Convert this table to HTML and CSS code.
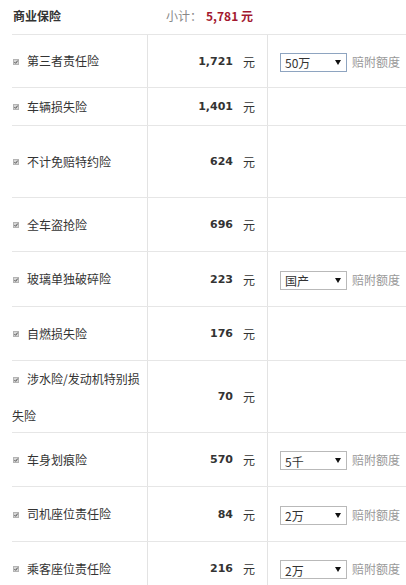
FILE: index.html
```html
<!DOCTYPE html>
<html lang="zh-CN">
<head>
<meta charset="utf-8">
<title>商业保险</title>
<link rel="stylesheet" href="styles.css">
</head>
<body>
<div class="page">
  <div class="head">
    <span class="title">商业保险</span>
    <span class="sub">小计：</span>
    <span class="total">5,781 元</span>
  </div>

  <div class="row h52">
    <div class="name"><span class="label"><svg class="cb" viewBox="0 0 6 6" width="6" height="6"><rect x="0.5" y="0.5" width="5" height="5" fill="#d6d6d6" stroke="#b4b4b4"/><path d="M1.4 3.1 L2.6 4.3 L4.7 1.6" fill="none" stroke="#444" stroke-width="0.9"/></svg>第三者责任险</span></div>
    <div class="price"><span class="num">1,721</span><span class="unit">元</span></div>
    <div class="opt"><div class="sel focus"><span>50万</span><i class="arrow"></i></div><span class="hint">赔附额度</span></div>
  </div>

  <div class="row h37">
    <div class="name"><span class="label"><svg class="cb" viewBox="0 0 6 6" width="6" height="6"><rect x="0.5" y="0.5" width="5" height="5" fill="#d6d6d6" stroke="#b4b4b4"/><path d="M1.4 3.1 L2.6 4.3 L4.7 1.6" fill="none" stroke="#444" stroke-width="0.9"/></svg>车辆损失险</span></div>
    <div class="price"><span class="num">1,401</span><span class="unit">元</span></div>
    <div class="opt"></div>
  </div>

  <div class="row h71">
    <div class="name"><span class="label"><svg class="cb" viewBox="0 0 6 6" width="6" height="6"><rect x="0.5" y="0.5" width="5" height="5" fill="#d6d6d6" stroke="#b4b4b4"/><path d="M1.4 3.1 L2.6 4.3 L4.7 1.6" fill="none" stroke="#444" stroke-width="0.9"/></svg>不计免赔特约险</span></div>
    <div class="price"><span class="num">624</span><span class="unit">元</span></div>
    <div class="opt"></div>
  </div>

  <div class="row h53">
    <div class="name"><span class="label"><svg class="cb" viewBox="0 0 6 6" width="6" height="6"><rect x="0.5" y="0.5" width="5" height="5" fill="#d6d6d6" stroke="#b4b4b4"/><path d="M1.4 3.1 L2.6 4.3 L4.7 1.6" fill="none" stroke="#444" stroke-width="0.9"/></svg>全车盗抢险</span></div>
    <div class="price"><span class="num">696</span><span class="unit">元</span></div>
    <div class="opt"></div>
  </div>

  <div class="row h54">
    <div class="name"><span class="label"><svg class="cb" viewBox="0 0 6 6" width="6" height="6"><rect x="0.5" y="0.5" width="5" height="5" fill="#d6d6d6" stroke="#b4b4b4"/><path d="M1.4 3.1 L2.6 4.3 L4.7 1.6" fill="none" stroke="#444" stroke-width="0.9"/></svg>玻璃单独破碎险</span></div>
    <div class="price"><span class="num">223</span><span class="unit">元</span></div>
    <div class="opt"><div class="sel"><span>国产</span><i class="arrow"></i></div><span class="hint">赔附额度</span></div>
  </div>

  <div class="row h53">
    <div class="name"><span class="label"><svg class="cb" viewBox="0 0 6 6" width="6" height="6"><rect x="0.5" y="0.5" width="5" height="5" fill="#d6d6d6" stroke="#b4b4b4"/><path d="M1.4 3.1 L2.6 4.3 L4.7 1.6" fill="none" stroke="#444" stroke-width="0.9"/></svg>自燃损失险</span></div>
    <div class="price"><span class="num">176</span><span class="unit">元</span></div>
    <div class="opt"></div>
  </div>

  <div class="row h71">
    <div class="name"><span class="label wrap"><svg class="cb" viewBox="0 0 6 6" width="6" height="6"><rect x="0.5" y="0.5" width="5" height="5" fill="#d6d6d6" stroke="#b4b4b4"/><path d="M1.4 3.1 L2.6 4.3 L4.7 1.6" fill="none" stroke="#444" stroke-width="0.9"/></svg>涉水险/发动机特别损失险</span></div>
    <div class="price"><span class="num">70</span><span class="unit">元</span></div>
    <div class="opt"></div>
  </div>

  <div class="row h53">
    <div class="name"><span class="label"><svg class="cb" viewBox="0 0 6 6" width="6" height="6"><rect x="0.5" y="0.5" width="5" height="5" fill="#d6d6d6" stroke="#b4b4b4"/><path d="M1.4 3.1 L2.6 4.3 L4.7 1.6" fill="none" stroke="#444" stroke-width="0.9"/></svg>车身划痕险</span></div>
    <div class="price"><span class="num">570</span><span class="unit">元</span></div>
    <div class="opt"><div class="sel"><span>5千</span><i class="arrow"></i></div><span class="hint">赔附额度</span></div>
  </div>

  <div class="row h54">
    <div class="name"><span class="label"><svg class="cb" viewBox="0 0 6 6" width="6" height="6"><rect x="0.5" y="0.5" width="5" height="5" fill="#d6d6d6" stroke="#b4b4b4"/><path d="M1.4 3.1 L2.6 4.3 L4.7 1.6" fill="none" stroke="#444" stroke-width="0.9"/></svg>司机座位责任险</span></div>
    <div class="price"><span class="num">84</span><span class="unit">元</span></div>
    <div class="opt"><div class="sel"><span>2万</span><i class="arrow"></i></div><span class="hint">赔附额度</span></div>
  </div>

  <div class="row h53">
    <div class="name"><span class="label"><svg class="cb" viewBox="0 0 6 6" width="6" height="6"><rect x="0.5" y="0.5" width="5" height="5" fill="#d6d6d6" stroke="#b4b4b4"/><path d="M1.4 3.1 L2.6 4.3 L4.7 1.6" fill="none" stroke="#444" stroke-width="0.9"/></svg>乘客座位责任险</span></div>
    <div class="price"><span class="num">216</span><span class="unit">元</span></div>
    <div class="opt"><div class="sel"><span>2万</span><i class="arrow"></i></div><span class="hint">赔附额度</span></div>
  </div>
</div>
</body>
</html>
```

FILE: styles.css
```css
* { box-sizing: border-box; }

html, body {
  margin: 0;
  padding: 0;
  background: #fff;
}

body {
  font-family: "Noto Sans CJK SC", "Noto Sans", sans-serif;
  font-size: 12px;
  color: #333;
  overflow: hidden;
}

.page {
  margin-left: 12px;
  width: 394px;
}

.head {
  height: 35px;
  border-bottom: 1px solid #e6e6e6;
  display: flex;
  align-items: center;
  padding-left: 1px;
  padding-bottom: 4px;
}

.title {
  width: 153px;
  font-weight: bold;
  font-size: 12px;
  color: #333;
}

.sub {
  color: #888;
  font-size: 12px;
  margin-right: 4px;
}

.total {
  color: #a3182f;
  font-weight: bold;
  font-size: 12px;
}

.row {
  display: flex;
  border-bottom: 1px solid #e6e6e6;
  box-sizing: content-box;
}

.h37 { height: 37px; }
.h52 { height: 52px; }
.h53 { height: 53px; }
.h54 { height: 54px; }
.h71 { height: 71px; }

.name {
  width: 135px;
  display: flex;
  align-items: center;
}

.label {
  display: block;
  line-height: 16px;
}

.label.wrap {
  line-height: 37px;
  margin-top: 1px;
}

.cb {
  display: inline-block;
  vertical-align: middle;
  margin: 0 8px 2px 1px;
}

.price {
  width: 121px;
  border-left: 1px solid #e3e3e3;
  border-right: 1px solid #e3e3e3;
  display: flex;
  align-items: center;
  justify-content: flex-end;
  padding-right: 12px;
}

.num {
  font-family: "DejaVu Sans", sans-serif;
  font-weight: bold;
  font-size: 11px;
  color: #333;
  margin-right: 10px;
}

.unit {
  font-size: 12px;
  color: #333;
}

.opt {
  flex: 1;
  display: flex;
  align-items: center;
  padding-left: 12px;
}

.sel {
  width: 67px;
  height: 19px;
  border: 1px solid #b9b9b9;
  display: flex;
  align-items: center;
  justify-content: space-between;
  padding: 1px 5px 0 4px;
  font-size: 12px;
  color: #333;
  margin-top: 2px;
}

.sel.focus {
  border-color: #8ea4c0;
}

.arrow {
  display: block;
  width: 0;
  height: 0;
  border-left: 3px solid transparent;
  border-right: 3px solid transparent;
  border-top: 5px solid #111;
  margin-bottom: 1px;
}

.hint {
  margin-left: 5px;
  color: #999;
  font-size: 12px;
}
```
